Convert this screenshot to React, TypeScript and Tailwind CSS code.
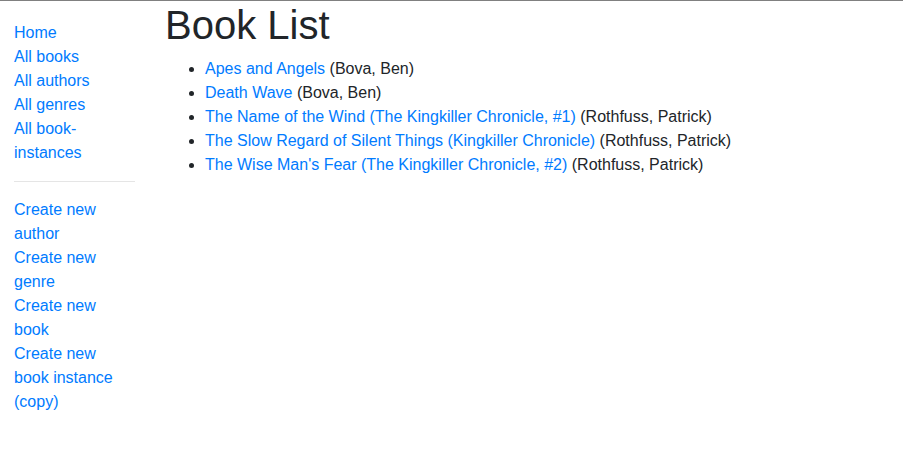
import React from 'react';

const books = [
  { title: 'Apes and Angels', author: 'Bova, Ben' },
  { title: 'Death Wave', author: 'Bova, Ben' },
  { title: 'The Name of the Wind (The Kingkiller Chronicle, #1)', author: 'Rothfuss, Patrick' },
  { title: 'The Slow Regard of Silent Things (Kingkiller Chronicle)', author: 'Rothfuss, Patrick' },
  { title: "The Wise Man's Fear (The Kingkiller Chronicle, #2)", author: 'Rothfuss, Patrick' },
];

const browseLinks = ['Home', 'All books', 'All authors', 'All genres', 'All book-instances'];
const createLinks = ['Create new author', 'Create new genre', 'Create new book', 'Create new book instance (copy)'];

export default function App() {
  return (
    <div className="min-h-[457px] bg-white border-t border-[#808080] font-['Liberation_Sans',Arial,sans-serif] text-base leading-6 text-[#212529]">
      <div className="flex">
        {/* Sidebar */}
        <div className="w-[150px] shrink-0 pl-[14px] pr-[15.5px]">
          <ul className="mt-5 list-none p-0">
            {browseLinks.map((label) => (
              <li key={label}>
                <a href="#" className="text-[#007bff]">{label}</a>
              </li>
            ))}
            <li>
              <hr className="my-4 border-0 border-t border-[rgba(0,0,0,0.1)]" />
            </li>
            {createLinks.map((label) => (
              <li key={label}>
                <a href="#" className="text-[#007bff]">{label}</a>
              </li>
            ))}
          </ul>
        </div>

        {/* Main content */}
        <div className="flex-1 px-[15px]">
          <h1 className="mb-2 text-[40px] leading-[1.2] font-normal">Book List</h1>
          <ul className="mb-4 list-disc pl-10">
            {books.map((book) => (
              <li key={book.title}>
                <a href="#" className="text-[#007bff]">{book.title}</a> ({book.author})
              </li>
            ))}
          </ul>
        </div>
      </div>
    </div>
  );
}
